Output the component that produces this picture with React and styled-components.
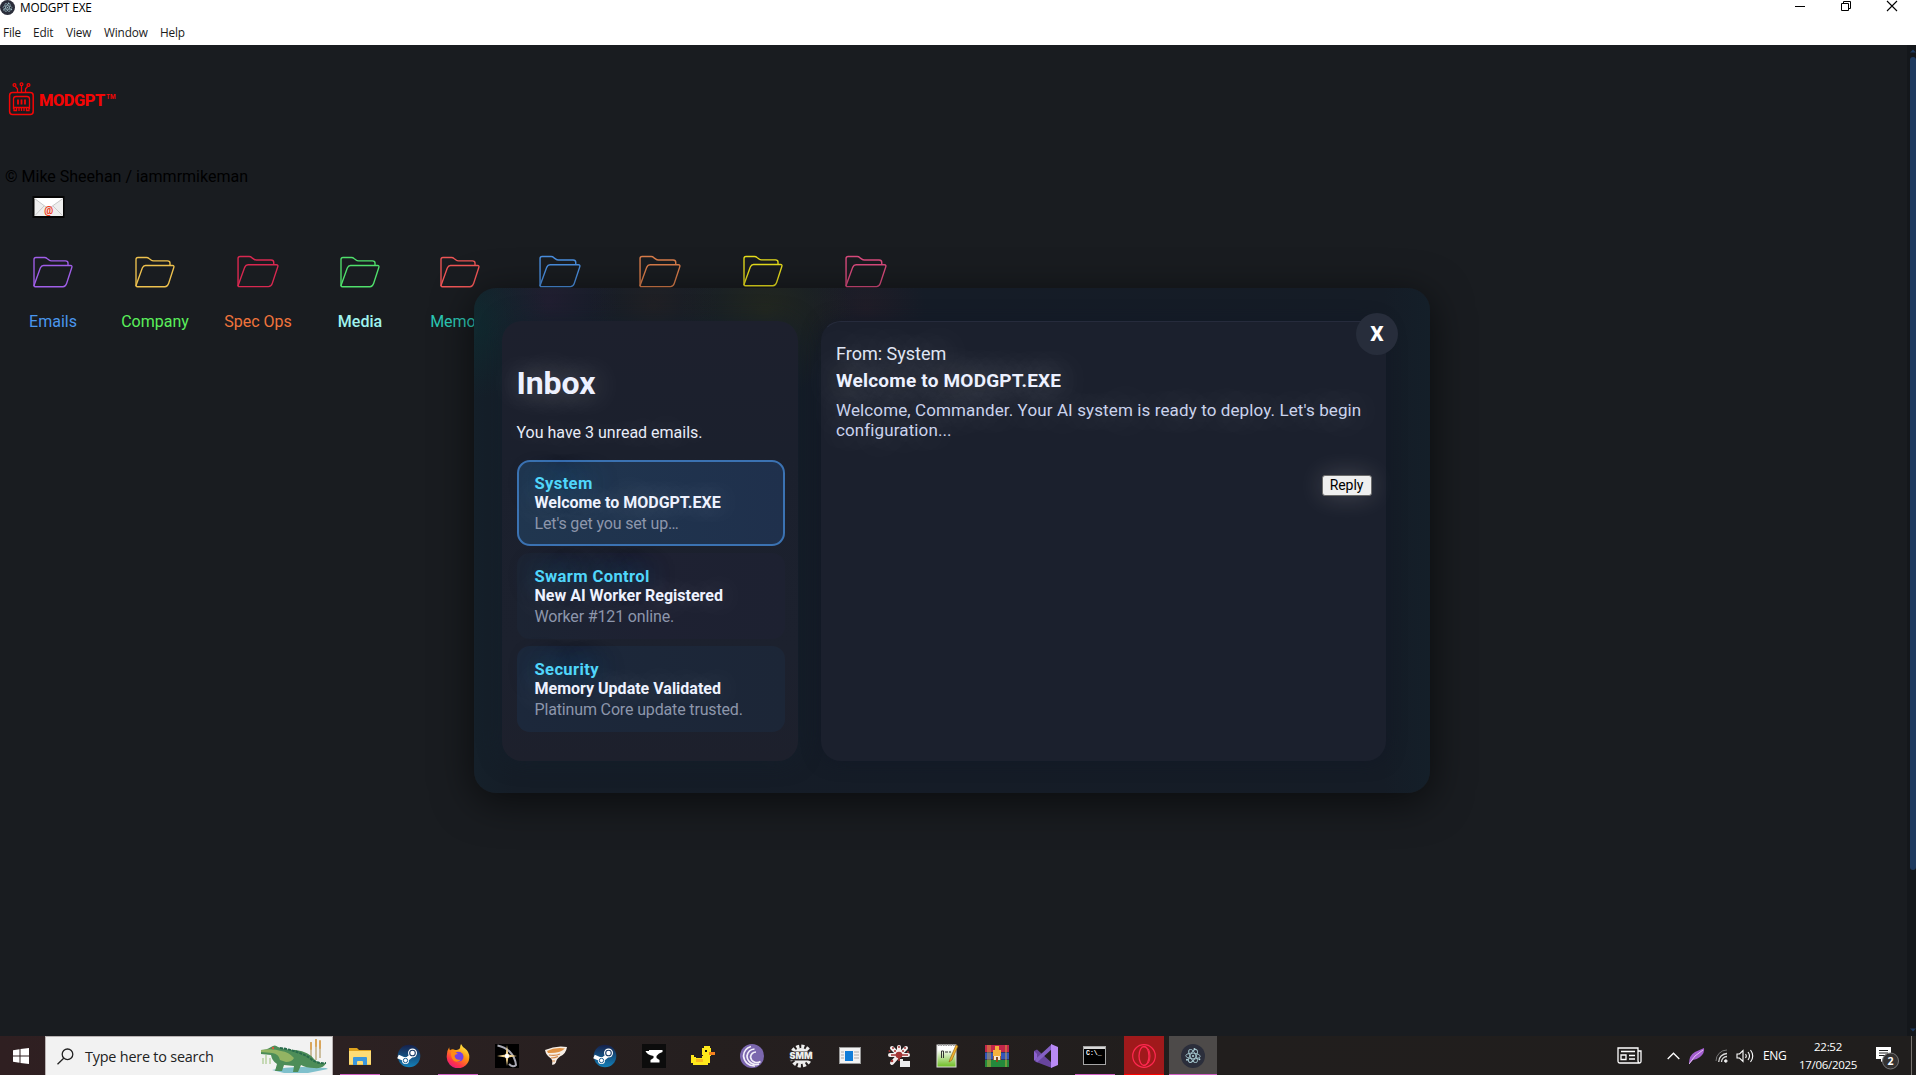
import React from "react";
import styled, { createGlobalStyle } from "styled-components";

const Global = createGlobalStyle`
  * { box-sizing: border-box; }
  html, body { margin: 0; padding: 0; }
  body { background: #191c20; overflow: hidden; font-family: Roboto, "Liberation Sans", sans-serif; }
  svg { display: block; flex: none; }
`;

const ui = `"Open Sans", "Noto Sans", sans-serif`;

const Screen = styled.div`
  position: relative;
  display: flex;
  flex-direction: column;
  width: 1916px;
  height: 1075px;
  overflow: hidden;
`;

const TitleBar = styled.header`
  display: flex;
  align-items: center;
  height: 15px;
  background: #fff;
  color: #000;
  font: 11.8px/15px ${ui};
`;
const AppName = styled.span`
  margin-left: 5px;
  letter-spacing: -0.18px;
`;
const WindowButtons = styled.div`
  display: flex;
  align-self: flex-start;
  gap: 34px;
  margin-left: auto;
  padding-right: 18px;
`;
const MenuBar = styled.nav`
  display: flex;
  gap: 12px;
  height: 30px;
  padding: 9px 3px 0;
  background: #fff;
  color: #1a1a1a;
  font: 11.8px/16px ${ui};
`;
const MenuItem = styled.span`
  width: ${(p) => p.$w}px;
  white-space: nowrap;
  letter-spacing: -0.15px;
`;

const Body = styled.div`
  flex: 1;
  display: flex;
  min-height: 0;
  background: #191c20;
`;
const Page = styled.main`
  flex: 1;
  padding-top: 37px;
`;
const Brand = styled.div`
  display: flex;
  align-items: flex-start;
  height: 85px;
  padding-left: 8px;
  color: #f50505;
`;
const BrandName = styled.span`
  width: 67px;
  margin: 8px 0 0 4px;
  font: 800 16.5px/22px Roboto, sans-serif;
  letter-spacing: -0.5px;
  white-space: nowrap;
`;
const Trade = styled.span`
  margin: 11px 0 0 0;
  font: 700 6px/8px Inter, sans-serif;
`;
const Credit = styled.div`
  height: 29px;
  padding-left: 5px;
  color: #000;
  font-size: 16px;
  line-height: 20px;
`;
const MailShortcut = styled.div`
  height: 60px;
  padding-left: 32px;
`;
const Folders = styled.div`
  display: flex;
  padding-left: 2px;
`;
const Folder = styled.div`
  display: flex;
  flex-direction: column;
  align-items: center;
  width: ${(p) => p.$w}px;
  color: ${(p) => p.$c};
  font-size: 16px;
  font-weight: ${(p) => p.$weight || 400};
  line-height: 20px;
`;
const FolderArt = styled.div`
  height: 56px;
  margin-top: ${(p) => (p.$raised ? -1 : 0)}px;
  margin-bottom: ${(p) => (p.$raised ? 1 : 0)}px;
`;

const ScrollTrack = styled.div`
  display: flex;
  flex-direction: column;
  align-items: center;
  width: 9px;
  padding: 4px 0 4px 2px;
  background: #14171b;
`;
const ScrollThumb = styled.div`
  width: 6px;
  height: 813px;
  margin: 4px 0 auto;
  border-radius: 3px;
  background: #1e3a5f;
`;

const Modal = styled.section`
  position: absolute;
  left: 474px;
  top: 288px;
  display: flex;
  gap: 23px;
  width: 956px;
  height: 505px;
  padding: 33px 44px 32px 28px;
  border-radius: 22px;
  background:
    radial-gradient(circle at 0px 35px, rgba(12, 50, 52, 0.5), transparent 75px),
    radial-gradient(circle at 75px 14px, rgba(44, 32, 58, 0.5), transparent 70px),
    radial-gradient(circle at 180px 18px, rgba(50, 38, 32, 0.4), transparent 65px),
    radial-gradient(circle at 292px 24px, rgba(46, 48, 24, 0.55), transparent 85px),
    radial-gradient(circle at 392px 20px, rgba(48, 30, 40, 0.4), transparent 60px),
    linear-gradient(90deg, #15202a 0, #151d27 40px, #151c27 50%, #151c26 910px, #141f29 956px);
  box-shadow: 0 8px 40px rgba(0, 0, 0, 0.6);
`;
const Sidebar = styled.aside`
  display: flex;
  flex-direction: column;
  width: 296px;
  padding: 43px 13px 0 14.5px;
  border-radius: 20px;
  background: linear-gradient(180deg, #1d202d 0, #1b202d 30%, #1c212e 75%, #1d202c 100%);
  color: #e8ecf8;
  text-shadow: 0 0 30px rgba(255, 255, 255, 0.4);
  box-shadow: 0 0 22px rgba(20, 32, 44, 0.7);
`;
const Heading = styled.h1`
  margin: 0 0 21px;
  font-size: 32px;
  font-weight: 700;
  line-height: 38px;
  color: #edf1ff;
  letter-spacing: -0.1px;
`;
const Unread = styled.p`
  margin: 0 0 18px;
  font-size: 16px;
  line-height: 19px;
`;
const MailList = styled.div`
  display: flex;
  flex-direction: column;
  gap: 7px;
`;
const Mail = styled.article`
  height: 86px;
  padding: 12px 16px;
  border: 2px solid ${(p) => p.$border || "transparent"};
  border-radius: 13px;
  background: ${(p) => p.$bg} border-box;
`;
const Sender = styled.div`
  color: #4fd6fb;
  font-size: 16.6px;
  font-weight: 700;
  line-height: 19px;
  text-shadow: 0 0 26px rgba(40, 160, 220, 0.5);
  letter-spacing: 0.35px;
`;
const Subject = styled.div`
  color: #eef2ff;
  font-size: 16px;
  font-weight: 700;
  line-height: 19px;
`;
const Preview = styled.div`
  margin-top: 2px;
  color: #8d96ab;
  font-size: 16px;
  line-height: 19px;
  letter-spacing: -0.15px;
  text-shadow: none;
`;
const Reader = styled.section`
  display: flex;
  flex-direction: column;
  width: 565px;
  padding: 20px 14px 0;
  border: 1px solid transparent;
  border-top-color: #262b3c;
  border-radius: 20px;
  background: #1b202d;
  color: #e0e6f5;
  text-shadow: 0 0 34px rgba(255, 255, 255, 0.6);
  box-shadow: 0 0 18px rgba(18, 24, 38, 0.8);
`;
const From = styled.div`
  font-size: 18px;
  line-height: 24px;
`;
const ReaderTitle = styled.h2`
  margin: 2px 0 6px;
  color: #edf1ff;
  font-size: 19px;
  font-weight: 700;
  line-height: 26px;
  letter-spacing: 0.2px;
`;
const Message = styled.p`
  margin: 0;
  color: #cbd3ec;
  font-size: 17px;
  line-height: 20px;
  letter-spacing: 0.115px;
  white-space: nowrap;
`;
const Reply = styled.button`
  align-self: flex-end;
  width: 50px;
  height: 21px;
  margin: 35px -0.5px 0 0;
  padding: 0;
  border: 1px solid #6b6b6b;
  border-radius: 3px;
  background: #efefef;
  color: #000;
  font: 14px/17px Roboto, sans-serif;
  letter-spacing: -0.1px;
  box-shadow: 0 0 26px rgba(255, 240, 240, 0.2);
  text-shadow: none;
`;
const Close = styled.button`
  position: absolute;
  top: 25px;
  right: 32px;
  width: 42px;
  height: 42px;
  padding: 0;
  border: 0;
  border-radius: 50%;
  background: #272d3b;
  color: #fff;
  font: 800 21px/42px Roboto, sans-serif;
`;

const TaskBar = styled.footer`
  display: flex;
  height: 39px;
  background: linear-gradient(90deg, #2f1f21 0, #2c2122 340px, #251f1f 700px, #211e1d 1200px, #201e1d 100%);
  color: #fff;
  font-family: ${ui};
`;
const Start = styled.div`
  display: flex;
  align-items: center;
  width: 45px;
  padding: 1px 0 0 13px;
`;
const Search = styled.div`
  display: flex;
  align-items: center;
  width: 288px;
  padding: 0 4px 0 11px;
  border: 1px solid #b9b3b3;
  border-bottom: 0;
  background: #f2f2f2;
  color: #222;
  font-size: 14.4px;
`;
const SearchText = styled.span`
  flex: 1;
  margin-left: 11px;
  letter-spacing: -0.2px;
`;
const Apps = styled.div`
  display: flex;
  padding-left: 2px;
`;
const AppCell = styled.div`
  display: flex;
  justify-content: center;
  width: 49px;
`;
const AppTile = styled.div`
  display: flex;
  align-items: center;
  justify-content: center;
  width: ${(p) => p.$w || 40}px;
  padding-top: 1px;
  background: ${(p) => p.$bg || "transparent"};
  border-bottom: 1px solid ${(p) => p.$line || "transparent"};
`;
const Tray = styled.div`
  display: flex;
  align-items: center;
  margin-left: auto;
  padding-right: 4px;
`;
const TrayItem = styled.div`
  width: ${(p) => p.$w}px;
  font-size: 12px;
  letter-spacing: -0.3px;
`;
const Clock = styled.div`
  width: 74px;
  text-align: center;
  font-size: 11.5px;
  line-height: 18px;
  letter-spacing: -0.3px;
`;
const Notifications = styled.div`
  width: 46px;
  padding: 4px 0 0 10px;
`;
const DesktopEdge = styled.div`
  width: 1px;
  height: 39px;
  background: #77736f;
`;

const ElectronIcon = ({ size }) => (
  <svg width={size} height={size} viewBox="0 0 24 24">
    <circle cx="12" cy="12" r="12" fill="#2b2e3b" />
    <g fill="none" stroke="#a4c6cd" strokeWidth="0.9">
      <ellipse cx="12" cy="12" rx="7.2" ry="2.8" transform="rotate(3 12 12)" />
      <ellipse cx="12" cy="12" rx="7.2" ry="2.8" transform="rotate(62 12 12)" />
      <ellipse cx="12" cy="12" rx="7.2" ry="2.8" transform="rotate(-60 12 12)" />
    </g>
    <g fill="#b4d8df">
      <circle cx="12" cy="12" r="1" />
      <circle cx="6" cy="15.7" r="1" />
      <circle cx="18.4" cy="15.2" r="1" />
      <circle cx="13.5" cy="5" r="1" />
    </g>
  </svg>
);

const RobotLogo = () => (
  <svg width="27" height="34" viewBox="0 0 27 34" fill="none" stroke="#f50505" strokeWidth="1.3">
    <rect x="1.6" y="10.6" width="23.6" height="22" rx="3" strokeWidth="1.5" />
    <path d="M5.5 27V17q0-2.5 2.5-2.5h11q2.5 0 2.5 2.5v10" />
    <path d="M10 17.5v5M13.5 17.5v5M17 17.5v5" strokeWidth="1.8" />
    <path d="M5.5 25.5h16M6 25v3.5h2.5V26M11 26v3M13.5 26v3M16 26v3M21 25v3.5h-2.5V26" />
    <path d="M13.5 10V4M9.5 10V7L7.5 4.5M17.5 10V7l2-2.5" />
    <circle cx="6.5" cy="3" r="1.4" />
    <circle cx="13.5" cy="2.3" r="1.4" />
    <circle cx="20.5" cy="3" r="1.4" />
  </svg>
);

const Envelope = () => (
  <svg width="33" height="22" viewBox="0 0 33 22">
    <rect x="0.5" y="0" width="32" height="22" fill="#050505" />
    <rect x="2.5" y="2" width="28.5" height="18" fill="#eeeeee" />
    <path d="M2.5 2h28.5L19 11q-2.5 1.5-5 0Z" fill="#fff" />
    <path d="M2.5 2.5L14 11q2.5 1.5 5 0L31 2.5M3 19.5L12 10M30.5 19.5L21 10" fill="none" stroke="#c9c9c9" />
    <text x="16.7" y="17.8" textAnchor="middle" fontFamily="Roboto" fontSize="10" fontWeight="800" fill="#f03a1a">@</text>
  </svg>
);

const FolderIcon = ({ color, big }) => (
  <svg width={big ? 42 : 40} height={big ? 33 : 32} viewBox="0 0 40 32" preserveAspectRatio="none" fill="none" stroke={color} strokeWidth="1.35" strokeLinejoin="round">
    <path d="M1 30V3.5Q1 1.5 3 1.5H11.5Q13 1.5 14 2.5L16 4Q17 4.8 18.5 4.8H32.5Q35 4.8 35 7V9" />
    <path d="M1.2 29L7.3 12Q8.4 9.5 10.5 9.5H37.5Q39.5 9.5 38.8 11.5L33.6 27.5Q32.5 30.7 30 30.7H2.5Q0.5 30.7 1.2 29Z" />
  </svg>
);

const Steam = () => (
  <svg width="24" height="24" viewBox="0 0 24 24">
    <defs>
      <linearGradient id="steam" x1="0" y1="0" x2="0" y2="1">
        <stop offset="0" stopColor="#16204a" />
        <stop offset="1" stopColor="#1380b8" />
      </linearGradient>
    </defs>
    <circle cx="12" cy="12" r="11.3" fill="url(#steam)" />
    <path d="M1 12.5L9 16l5-4" stroke="#fff" strokeWidth="4" fill="none" />
    <circle cx="15.5" cy="9" r="4.5" fill="#fff" />
    <circle cx="15.5" cy="9" r="2.8" fill="#fff" stroke="#173b68" strokeWidth="1.1" />
    <circle cx="8.5" cy="16.5" r="3.5" fill="#fff" />
    <circle cx="8.5" cy="16.5" r="2.2" fill="none" stroke="#1c5e91" />
  </svg>
);

const appIcons = {
  explorer: (
    <svg width="24" height="24" viewBox="0 0 24 24">
      <path d="M1 4h8l2 2h12v15H1Z" fill="#dfa31e" />
      <path d="M1 7h22v13.5H1Z" fill="#fddc76" />
      <path d="M5 21v-7q0-1 1-1h12q1 0 1 1v7h-4v-3q0-1-1-1h-4q-1 0-1 1v3Z" fill="#3a96dc" />
    </svg>
  ),
  steam: <Steam />,
  firefox: (
    <svg width="24" height="24" viewBox="0 0 24 24">
      <defs>
        <linearGradient id="fox" x1="0.8" y1="0" x2="0.2" y2="1">
          <stop offset="0" stopColor="#fff44f" />
          <stop offset="0.4" stopColor="#ff980e" />
          <stop offset="0.75" stopColor="#ff3647" />
          <stop offset="1" stopColor="#e31587" />
        </linearGradient>
      </defs>
      <path d="M15 0q1.5 3 4 4.5 4.5 3.5 4.3 9A11.3 11 0 0 1 .7 13Q.5 7 3.2 3.3q0 2 .8 3Q6.5 4.5 9 6q4 0 5-2 .2-2 1-4Z" fill="url(#fox)" />
      <circle cx="12.5" cy="12.8" r="5" fill="#7542e5" />
      <path d="M5 8q4-1 7 2-3 0-3.5 2Q10 17 15 15.5 12 19 8 17 4.5 14 5 8Z" fill="#ff8a16" />
    </svg>
  ),
  star: (
    <svg width="24" height="24" viewBox="0 0 24 24">
      <rect width="24" height="24" fill="#000" />
      <path d="M2.5 1.5Q10 3 15 8T21 21q-3 3-7-1" fill="none" stroke="#a9a9b4" strokeWidth="2" />
      <path d="M12 1l1.3 9.6L22 12l-8.7 1.4L12 22l-1.3-8.6L2 12l8.7-1.4Z" fill="#f5d590" />
      <circle cx="12" cy="12" r="2.2" fill="#fff" />
    </svg>
  ),
  tornado: (
    <svg width="24" height="24" viewBox="0 0 24 24">
      <path d="M1 6Q12 1 23 3q-1 7-7 9.5-4 3-4 6-2 3-4 2 1-4-1-6-5-3-6-8.5Z" fill="#f6eee5" />
      <path d="M3 7q8-4 18-2.5-5 5-17 4.5Z" fill="#e09244" />
      <path d="M5 11q7 1 11-1M7 14q4 0 7-1.5M8 17h3" fill="none" stroke="#d98b4c" strokeWidth="1.2" />
    </svg>
  ),
  anvil: (
    <svg width="24" height="24" viewBox="0 0 24 24">
      <rect width="24" height="24" fill="#0c0c0c" />
      <path d="M3.5 7H7V6h13.5v2q-4 1-6 4v2l3 2v2.5h-9V16l3-2v-2Q5 11 3.5 7Z" fill="#fff" />
    </svg>
  ),
  duck: (
    <svg width="26" height="24" viewBox="0 0 26 24" shapeRendering="crispEdges">
      <path d="M14 2h6v2h1v8h-1v7h-2v2H3v-2H1v-8h3v2h2v1h6v-2h1v-1h-1V4h2Z" fill="#ffe81c" />
      <path d="M19 8h6v3h-6Z" fill="#f58220" />
      <path d="M6 15h7v3H6Z" fill="#f9b81d" />
      <path d="M15 6h2v2h-2Z" fill="#111" />
    </svg>
  ),
  torrent: (
    <svg width="24" height="24" viewBox="0 0 24 24">
      <circle cx="12" cy="12" r="12" fill="#7b67ae" />
      <g fill="none" stroke="#f2effa" strokeWidth="1.7">
        <path d="M14.5 5A8.5 8.5 0 0 0 7 12a9 9 0 0 0 12 8" />
        <path d="M16 8a6 6 0 0 0-5.5 5 6.5 6.5 0 0 0 10 4.5" />
        <path d="M11 2.5A10.5 10.5 0 0 0 3.5 12a11 11 0 0 0 11.5 10" />
      </g>
    </svg>
  ),
  smm: (
    <svg width="26" height="24" viewBox="0 0 26 24">
      <circle cx="13" cy="12" r="9.5" fill="none" stroke="#eee" strokeWidth="4" strokeDasharray="3 1.974" />
      <circle cx="13" cy="12" r="8" fill="#eee" />
      <rect x="1" y="7.5" width="24" height="9" fill="#2b2525" />
      <text x="13" y="15.3" textAnchor="middle" fontFamily="Inter" fontWeight="900" fontSize="9" textLength="23" lengthAdjust="spacingAndGlyphs" fill="#eee">SMM</text>
    </svg>
  ),
  panel: (
    <svg width="22" height="18" viewBox="0 0 22 18">
      <rect x="0.5" y="0.5" width="21" height="16" fill="#f2f2f2" stroke="#999" />
      <rect x="6" y="4" width="8" height="10" fill="#0f7cd8" />
      <path d="M2 5h3M2 8h3M2 11h3M15 5h5M15 8h5M15 11h5" stroke="#aaa" />
    </svg>
  ),
  splat: (
    <svg width="24" height="24" viewBox="0 0 24 24">
      <g fill="none" stroke="#f4eeee" strokeWidth="4" strokeLinecap="round">
        <path d="M12 11V3M12 11L5 4M12 11l7-7M12 11H3M12 11h9M12 11l-7 8" />
      </g>
      <path d="M4 11h17M12 11v6" stroke="#a33434" strokeWidth="1.6" />
      <g fill="#a33434">
        <circle cx="12" cy="3" r="1" />
        <circle cx="6" cy="4" r="1" />
        <circle cx="18" cy="4" r="1" />
        <circle cx="2.5" cy="7" r="1" />
        <circle cx="21" cy="8" r="1" />
        <circle cx="5" cy="17" r="1.3" />
        <circle cx="8" cy="7" r="1" />
        <circle cx="16" cy="7" r="1" />
        <circle cx="12" cy="11" r="3.3" />
      </g>
      <path d="M13 15h3v2h7v6H13Z" fill="#ececec" />
    </svg>
  ),
  notepad: (
    <svg width="24" height="24" viewBox="0 0 24 24">
      <defs>
        <linearGradient id="np" x1="0" y1="0" x2="0" y2="1">
          <stop offset="0.2" stopColor="#fff" />
          <stop offset="1" stopColor="#6cbd20" />
        </linearGradient>
      </defs>
      <rect x="1" y="1" width="19" height="22" fill="url(#np)" stroke="#ddd" />
      <path d="M2 1h18" stroke="#999" strokeWidth="2" strokeDasharray="1.5 1" />
      <path d="M5.5 14V7h2v7M9 8h3M13 8h2" fill="none" stroke="#333" />
      <path d="M13 18l1-3 6-14 2 1-6 14Z" fill="#f0b22c" stroke="#8c5a12" strokeWidth="0.6" />
    </svg>
  ),
  winrar: (
    <svg width="24" height="24" viewBox="0 0 24 24">
      <rect y="1" width="24" height="7" fill="#c2264a" />
      <rect y="8.5" width="24" height="7" fill="#3455b8" />
      <rect y="16" width="24" height="7" fill="#248a3c" />
      <path d="M3 1v22M5 1v22M21 1v22" stroke="#e7b83c" strokeWidth="0.8" />
      <path d="M8 7h8v9H8Z" fill="#a8672c" />
      <path d="M10 2h4v4h2v6H8V6h2Z" fill="#f5b23c" />
      <path d="M9 12h6v4H9Z" fill="#f6e7d2" />
      <path d="M11 13h2v5h-2Z" fill="#8c4a1c" />
    </svg>
  ),
  studio: (
    <svg width="24" height="24" viewBox="0 0 24 24">
      <path d="M0 7l3-1.500L18 19v5L1 17.500Z" fill="#68459e" />
      <path d="M0 17V7l3 3v4Z" fill="#8c62cf" />
      <path d="M3 18.500L18 5V0L1 15.500Z" fill="#8460c4" />
      <path d="M17 0l7 3v18l-7 3Z" fill="#b98af5" />
    </svg>
  ),
  cmd: (
    <svg width="23" height="19" viewBox="0 0 23 19">
      <rect x="0.5" y="0.5" width="22" height="18" fill="#000" stroke="#a5a5a5" />
      <rect x="1" y="1" width="21" height="2" fill="#d8d8d8" />
      <text x="3" y="9.3" fontFamily="Liberation Mono" fontSize="6.5" fontWeight="700" fill="#fff">C:\_</text>
    </svg>
  ),
  opera: (
    <svg width="24" height="24" viewBox="0 0 24 24" fill="none" stroke="#ff2850">
      <circle cx="12" cy="12" r="11.3" strokeWidth="1.2" />
      <ellipse cx="12" cy="12" rx="5" ry="9.5" strokeWidth="1.3" />
      <path d="M11 2.5q7 0 7 9.500t-7 9.500" />
    </svg>
  ),
  electron: <ElectronIcon size={24} />,
};

const taskApps = [
  { icon: "explorer", line: "#d05fc4" },
  { icon: "steam" },
  { icon: "firefox", line: "#d05fc4" },
  { icon: "star" },
  { icon: "tornado" },
  { icon: "steam" },
  { icon: "anvil" },
  { icon: "duck" },
  { icon: "torrent" },
  { icon: "smm" },
  { icon: "panel" },
  { icon: "splat" },
  { icon: "notepad" },
  { icon: "winrar" },
  { icon: "studio" },
  { icon: "cmd", line: "#d05fc4" },
  { icon: "opera", line: "#ff0000", bg: "#a0191b" },
  { icon: "electron", line: "#d05fc4", bg: "#4d4a49", w: 48 },
];

const Crocodile = () => (
  <svg width="70" height="36" viewBox="0 0 70 36">
    <path d="M53 22V4M58 22V1M62 20V5" stroke="#a58a4a" strokeWidth="1" />
    <path d="M53 5v6M58 2v6M62 3v7" stroke="#d9a55a" strokeWidth="2" strokeLinecap="round" />
    <path d="M8 26V17M12 26V20M5 26v-6" stroke="#a9c98c" strokeWidth="1.2" />
    <path d="M14 32q20-5 54-2l2 1-20 4H26Z" fill="#7fc0cc" />
    <path d="M3 12q6 0 10-3 4-3 7 0 8 3 18 3 13 2 18 9 4 5 12 4-2 6-12 5-8 0-13-3l-3 7h-5l1-6-10-1-2 6h-7l2-7q-5-3-6-9l-10-1Z" fill="#4d8d58" />
    <path d="M3 14l11 1q7 1 8 7l6 2q6 0 8-4-5-6-13-7-8-3-20-1Z" fill="#93b463" />
    <path d="M22 10q16 2 30 10 6 6 16 5" fill="none" stroke="#286b4c" strokeWidth="2" strokeDasharray="3 1" />
    <circle cx="15" cy="10" r="1.2" fill="#d85a3c" />
  </svg>
);

const folders = [
  { name: "Emails", w: 102, icon: "#a05ee8", c: "#4a97ee" },
  { name: "Company", w: 102, icon: "#eec14e", c: "#5bf05b" },
  { name: "Spec Ops", w: 104, icon: "#d82850", c: "#f0743c", big: true, raised: true },
  { name: "Media", w: 100, icon: "#50e06c", c: "#9ff3ee", weight: 500 },
  { name: "Memory", w: 99, icon: "#ee5555", c: "#2cc8b4" },
  { name: "", w: 102, icon: "#4a8ede", c: "#4a8ede", big: true, raised: true },
  { name: "", w: 98, icon: "#d87c4a", c: "#d87c4a", big: true, raised: true },
  { name: "", w: 108, icon: "#e8de1c", c: "#e8de1c", raised: true },
  { name: "", w: 98, icon: "#d84a7c", c: "#d84a7c", big: true, raised: true },
];

const mails = [
  { from: "System", subject: "Welcome to MODGPT.EXE", preview: "Let's get you set up…", border: "#3b72b2", bg: "linear-gradient(90deg, #20364f, #1f304c)" },
  { from: "Swarm Control", subject: "New AI Worker Registered", preview: "Worker #121 online.", bg: "linear-gradient(90deg, #1c2433, #1e2132 50%, #1d2131)" },
  { from: "Security", subject: "Memory Update Validated", preview: "Platinum Core update trusted.", bg: "linear-gradient(90deg, #1c283b, #1c2637)" },
];

export default function App() {
  return (
    <Screen>
      <Global />
      <TitleBar>
        <ElectronIcon size={15} />
        <AppName>MODGPT EXE</AppName>
        <WindowButtons>
          <svg width="12" height="12" viewBox="0 0 12 12"><path d="M1 6.5h10" stroke="#000" /></svg>
          <svg width="12" height="12" viewBox="0 0 12 12" fill="none" stroke="#000"><path d="M1.5 3.5h7v7h-7ZM3.5 3V1.5h7v7H9" /></svg>
          <svg width="12" height="12" viewBox="0 0 12 12"><path d="M1 1l10 10M11 1L1 11" stroke="#000" strokeWidth="1.1" /></svg>
        </WindowButtons>
      </TitleBar>
      <MenuBar>
        <MenuItem $w={18}>File</MenuItem>
        <MenuItem $w={21}>Edit</MenuItem>
        <MenuItem $w={26}>View</MenuItem>
        <MenuItem $w={44}>Window</MenuItem>
        <MenuItem $w={26}>Help</MenuItem>
      </MenuBar>
      <Body>
        <Page>
          <Brand>
            <RobotLogo />
            <BrandName>MODGPT</BrandName>
            <Trade>TM</Trade>
          </Brand>
          <Credit>© Mike Sheehan / iammrmikeman</Credit>
          <MailShortcut><Envelope /></MailShortcut>
          <Folders>
            {folders.map((f, i) => (
              <Folder key={i} $w={f.w} $c={f.c} $weight={f.weight}>
                <FolderArt $raised={f.raised}>
                  <FolderIcon color={f.icon} big={f.big} />
                </FolderArt>
                {f.name && <span>{f.name}</span>}
              </Folder>
            ))}
          </Folders>
        </Page>
        <ScrollTrack>
          <svg width="6" height="4" viewBox="0 0 6 4"><path d="M0 3.5L3 0.5 6 3.5Z" fill="#1e3a5f" /></svg>
          <ScrollThumb />
          <svg width="6" height="4" viewBox="0 0 6 4"><path d="M0 0.5L3 3.5 6 0.5Z" fill="#1e3a5f" /></svg>
        </ScrollTrack>
      </Body>
      <Modal>
        <Sidebar>
          <Heading>Inbox</Heading>
          <Unread>You have 3 unread emails.</Unread>
          <MailList>
            {mails.map((m) => (
              <Mail key={m.from} $border={m.border} $bg={m.bg}>
                <Sender>{m.from}</Sender>
                <Subject>{m.subject}</Subject>
                <Preview>{m.preview}</Preview>
              </Mail>
            ))}
          </MailList>
        </Sidebar>
        <Reader>
          <From>From: System</From>
          <ReaderTitle>Welcome to MODGPT.EXE</ReaderTitle>
          <Message>
            Welcome, Commander. Your AI system is ready to deploy. Let's begin
            <br />
            configuration...
          </Message>
          <Reply>Reply</Reply>
        </Reader>
        <Close>X</Close>
      </Modal>
      <TaskBar>
        <Start>
          <svg width="16" height="16" viewBox="0 0 16 16" fill="#fff">
            <path d="M0 2.3L6.5 1.3V7.5H0ZM7.5 1.1L16 0V7.5H7.5ZM0 8.5H6.5V14.7L0 13.7ZM7.5 8.5H16V16L7.5 14.9Z" />
          </svg>
        </Start>
        <Search>
          <svg width="17" height="17" viewBox="0 0 17 17" fill="none" stroke="#222" strokeWidth="1.3">
            <circle cx="10.5" cy="6.3" r="5.3" />
            <path d="M6.7 10.3L0.5 16.3" />
          </svg>
          <SearchText>Type here to search</SearchText>
          <Crocodile />
        </Search>
        <Apps>
          {taskApps.map((a, i) => (
            <AppCell key={i}>
              <AppTile $w={a.w} $bg={a.bg} $line={a.line}>{appIcons[a.icon]}</AppTile>
            </AppCell>
          ))}
        </Apps>
        <Tray>
          <TrayItem $w={50}>
            <svg width="25" height="17" viewBox="0 0 25 17" fill="none" stroke="#fff" strokeWidth="1.3">
              <path d="M1 1h20v12.5q0 2.5 2 2.5H3q-2 0-2-2ZM21 4h3v10.5q0 1.5-1.5 1.5" />
              <path d="M4 4.5h14M4 8h5v4.5H4ZM12 8.5h6M12 12h6" />
            </svg>
          </TrayItem>
          <TrayItem $w={22}>
            <svg width="13" height="8" viewBox="0 0 13 8" fill="none" stroke="#fff" strokeWidth="1.3"><path d="M0.7 7L6.5 1.2 12.3 7" /></svg>
          </TrayItem>
          <TrayItem $w={26}>
            <svg width="16" height="16" viewBox="0 0 16 16"><path d="M0 16Q0 7 6 4l9-4q1 5-4 9-4 3-7 3Z" fill="#a45fd0" /><path d="M0 16Q5 7 14 2" fill="none" stroke="#e6c3f5" /></svg>
          </TrayItem>
          <TrayItem $w={21}>
            <svg width="13" height="14" viewBox="0 0 13 14" fill="none" stroke="#ddd">
              <path d="M1 12A11 11 0 0 1 12 1" stroke="#777" />
              <path d="M3.7 13A8.5 8.5 0 0 1 12 4.5M6.5 13A5.5 5.5 0 0 1 12 7.5" strokeWidth="1.3" />
              <circle cx="10.8" cy="12" r="1.3" fill="#fff" />
            </svg>
          </TrayItem>
          <TrayItem $w={27}>
            <svg width="18" height="14" viewBox="0 0 18 14" fill="none" stroke="#fff" strokeWidth="1.1">
              <path d="M1 5h2.5L7 1.5v11L3.5 9H1ZM9.5 5q1.5 2 0 4M12 3q3 4 0 8M14.5 1q4.5 6 0 12" />
            </svg>
          </TrayItem>
          <TrayItem $w={28}>ENG</TrayItem>
          <Clock>22:52<br />17/06/2025</Clock>
          <Notifications>
            <svg width="26" height="26" viewBox="0 0 26 26">
              <path d="M1 2h15v12H10l-4 3v-3H1Z" fill="#fff" />
              <path d="M4 5.5h9M4 8h9M4 10.5h6" stroke="#222" />
              <circle cx="15.5" cy="16" r="8" fill="#343231" stroke="#777" />
              <text x="15.5" y="19.7" textAnchor="middle" fontFamily="Open Sans" fontSize="10.5" fontWeight="700" fill="#fff">2</text>
            </svg>
          </Notifications>
          <DesktopEdge />
        </Tray>
      </TaskBar>
    </Screen>
  );
}
